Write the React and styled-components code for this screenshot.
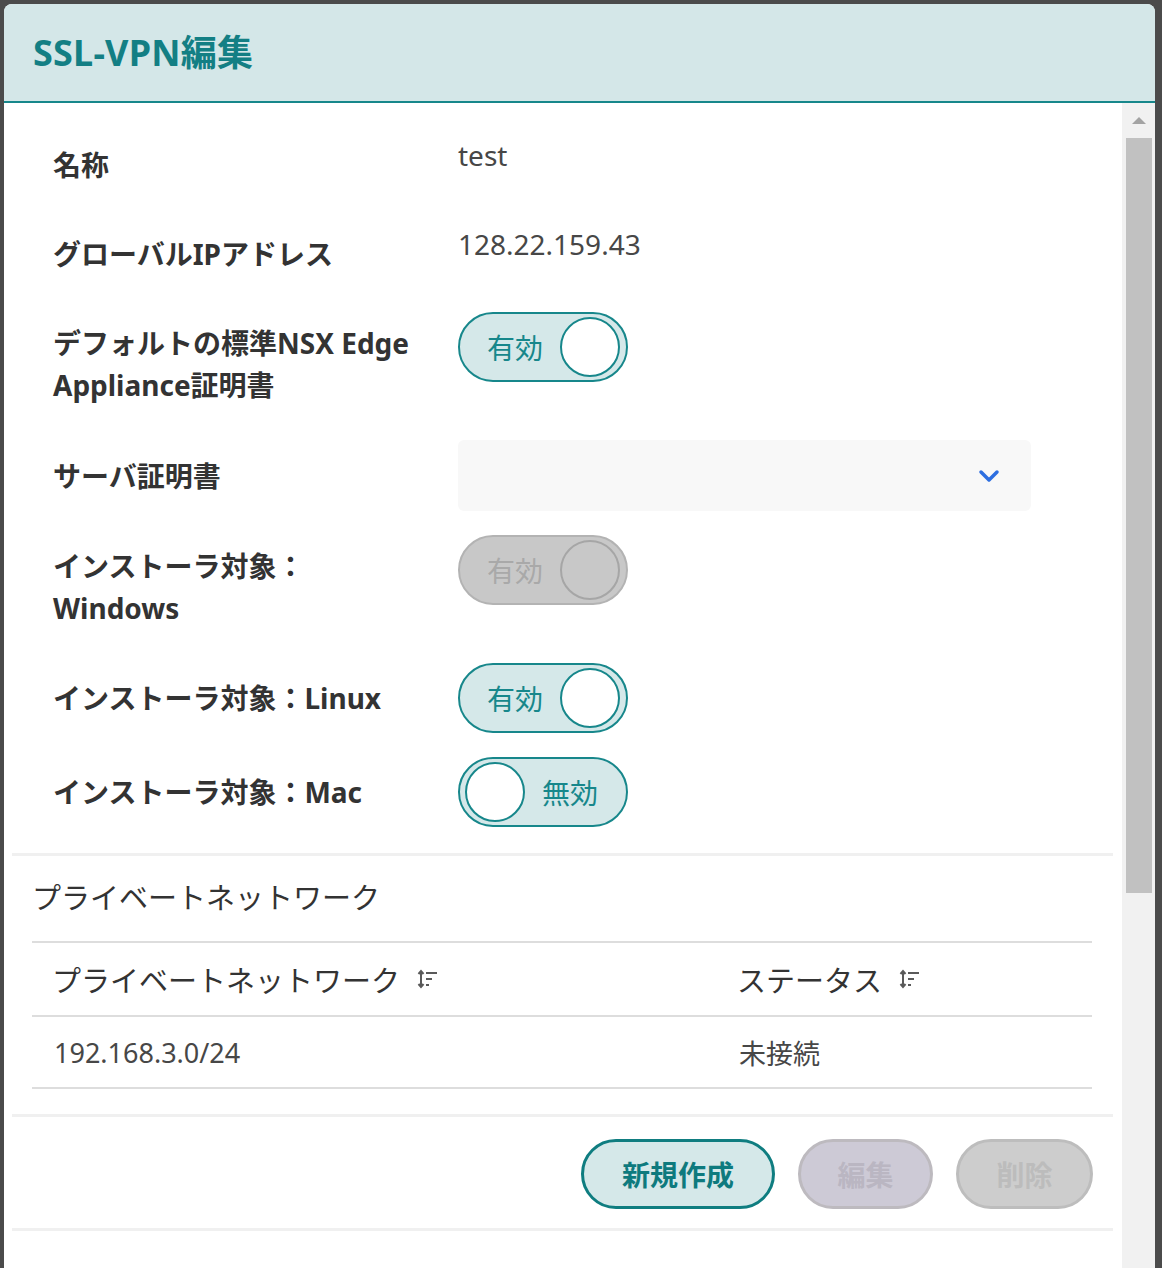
import styled, { createGlobalStyle } from "styled-components"

const GlobalStyle = createGlobalStyle`
  html, body {
    margin: 0;
    padding: 0;
    background: #4b4b4b;
  }
  body {
    font-family: "Noto Sans", "Noto Sans CJK JP", sans-serif;
  }
  * {
    box-sizing: border-box;
  }
`

const SortIcon = () => (
  <svg width="22" height="22" viewBox="0 0 22 22" fill="none" stroke="#5a5a5a" strokeWidth="2">
    <path d="M5 3v16" />
    <path d="M2.5 6 5 3l2.5 3M2.5 16 5 19l2.5-3" />
    <path d="M10 5h11M10 11h6M10 17h3" />
  </svg>
)

const Chevron = () => (
  <svg width="24" height="16" viewBox="0 0 24 16" fill="none" stroke="#2d6ee0" strokeWidth="3.5" strokeLinecap="round" strokeLinejoin="round">
    <path d="M4 4l8 8 8-8" />
  </svg>
)

const Toggle = ({ on, disabled }) => (
  <Switch $on={on} $disabled={disabled}>
    {on ? <SwitchText $disabled={disabled}>有効</SwitchText> : null}
    <Knob $disabled={disabled} />
    {on ? null : <SwitchText>無効</SwitchText>}
  </Switch>
)

const App = () => {
  return (
    <>
      <GlobalStyle />
      <Page>
        <Modal>
          <Header>
            <Title>SSL-VPN編集</Title>
          </Header>
          <Body>
            <Content>
              <FormSection>
                <Row>
                  <Label>名称</Label>
                  <Value>test</Value>
                </Row>
                <Row>
                  <Label>グローバルIPアドレス</Label>
                  <Value>128.22.159.43</Value>
                </Row>
                <Row>
                  <Label>デフォルトの標準NSX Edge<br />Appliance証明書</Label>
                  <Toggle on />
                </Row>
                <Row $center>
                  <Label>サーバ証明書</Label>
                  <Select>
                    <Chevron />
                  </Select>
                </Row>
                <Row>
                  <Label>インストーラ対象：<br />Windows</Label>
                  <Toggle on disabled />
                </Row>
                <Row $center>
                  <Label>インストーラ対象：Linux</Label>
                  <Toggle on />
                </Row>
                <Row $center>
                  <Label>インストーラ対象：Mac</Label>
                  <Toggle on={false} />
                </Row>
              </FormSection>

              <NetworkSection>
                <SectionTitle>プライベートネットワーク</SectionTitle>
                <Table>
                  <HeadCell>プライベートネットワーク<SortIcon /></HeadCell>
                  <HeadCell>ステータス<SortIcon /></HeadCell>
                  <Cell>192.168.3.0/24</Cell>
                  <Cell>未接続</Cell>
                </Table>
              </NetworkSection>

              <ButtonSection>
                <Button $variant="primary" $width={194}>新規作成</Button>
                <Button $variant="lavender" $width={135}>編集</Button>
                <Button $variant="gray" $width={137}>削除</Button>
              </ButtonSection>
              <Filler />
            </Content>
            <ScrollTrack>
              <ScrollArrow />
              <ScrollThumb />
            </ScrollTrack>
          </Body>
        </Modal>
      </Page>
    </>
  )
}

export default App

const Page = styled.div`
  height: 1268px;
  overflow: hidden;
  padding: 4px 0 0 4px;
`

const Modal = styled.div`
  width: 1151px;
  height: 1300px;
  background: #fff;
  border-radius: 8px 8px 0 0;
  overflow: hidden;
  display: flex;
  flex-direction: column;
`

const Header = styled.div`
  height: 99px;
  flex: none;
  background: #d4e7e8;
  border-bottom: 2px solid #17878b;
  display: flex;
  align-items: center;
  padding: 0 0 4px 29px;
`

const Title = styled.h1`
  margin: 0;
  font-size: 36px;
  font-weight: 700;
  color: #137f84;
  letter-spacing: 0.2px;
`

const Body = styled.div`
  flex: 1;
  display: flex;
  min-height: 0;
`

const Content = styled.div`
  flex: 1;
  padding: 0 9px 0 8px;
`

const FormSection = styled.div`
  display: grid;
  row-gap: 24px;
  padding: 31px 0 26px 41px;
  border-bottom: 3px solid #f0f0f0;
`

const Row = styled.div`
  display: grid;
  grid-template-columns: 405px 1fr;
  align-items: ${p => (p.$center ? "center" : "start")};
  min-height: 65px;
`

const Label = styled.div`
  padding: 10px 0;
  font-size: 28px;
  line-height: 42px;
  font-weight: 700;
  color: #333;
`

const Value = styled.div`
  font-size: 28px;
  line-height: 42px;
  color: #474747;
`

const Switch = styled.div`
  width: 170px;
  height: 70px;
  border-radius: 35px;
  border: 2px solid ${p => (p.$disabled ? "#b3b3b3" : "#17878b")};
  background: ${p => (p.$disabled ? "#c8c8c8" : "#d5e8e9")};
  display: flex;
  align-items: center;
  justify-content: space-between;
  padding: ${p => (p.$on ? "0 6px 0 27px" : "0 28px 0 5px")};
`

const SwitchText = styled.span`
  font-size: 28px;
  color: ${p => (p.$disabled ? "#a9a9a9" : "#17878b")};
`

const Knob = styled.span`
  width: 60px;
  height: 60px;
  border-radius: 50%;
  border: 2px solid ${p => (p.$disabled ? "#a6a6a6" : "#17878b")};
  background: ${p => (p.$disabled ? "#c8c8c8" : "#fff")};
`

const Select = styled.div`
  width: 573px;
  height: 71px;
  border-radius: 6px;
  background: #f8f8f8;
  display: flex;
  align-items: center;
  justify-content: flex-end;
  padding-right: 30px;
`

const NetworkSection = styled.div`
  padding: 21px 21px 25px 20px;
  border-bottom: 3px solid #f0f0f0;
`

const SectionTitle = styled.h2`
  margin: 0 0 22px 0;
  font-size: 29px;
  line-height: 42px;
  font-weight: 400;
  color: #333;
`

const Table = styled.div`
  display: grid;
  grid-template-columns: 685px 1fr;
  border-top: 2px solid #dddddd;
`

const HeadCell = styled.div`
  height: 74px;
  display: flex;
  align-items: center;
  gap: 16px;
  padding: 0 20px;
  font-size: 29px;
  color: #333;
  border-bottom: 2px solid #dddddd;
`

const Cell = styled.div`
  height: 72px;
  display: flex;
  align-items: center;
  padding: 0 21px 0 22px;
  font-size: 27px;
  color: #474747;
  border-bottom: 2px solid #dddddd;
`

const variants = {
  primary: { bg: "#d5e8e9", border: "#0f7d80", color: "#0e7a7e" },
  lavender: { bg: "#cdcad6", border: "#bdbabf", color: "#bab6c2" },
  gray: { bg: "#cdcdcd", border: "#bdbdbd", color: "#bcbcbc" },
}

const ButtonSection = styled.div`
  display: flex;
  justify-content: flex-end;
  gap: 23px;
  padding: 22px 20px 19px;
  border-bottom: 3px solid #f0f0f0;
`

const Button = styled.button`
  width: ${p => p.$width}px;
  height: 70px;
  border-radius: 35px;
  border: 3px solid ${p => variants[p.$variant].border};
  background: ${p => variants[p.$variant].bg};
  color: ${p => variants[p.$variant].color};
  font-family: "Noto Sans", "Noto Sans CJK JP", sans-serif;
  font-size: 28px;
  font-weight: 700;
  cursor: pointer;
`

const Filler = styled.div`
  height: 200px;
`

const ScrollTrack = styled.div`
  width: 33px;
  flex: none;
  background: #f1f1f1;
  display: flex;
  flex-direction: column;
  align-items: center;
`

const ScrollArrow = styled.div`
  margin: 14px 0 14px 0;
  width: 0;
  height: 0;
  border-left: 7px solid transparent;
  border-right: 7px solid transparent;
  border-bottom: 7px solid #a3a3a3;
`

const ScrollThumb = styled.div`
  width: 26px;
  height: 755px;
  background: #c1c1c1;
  margin-left: 1px;
`
